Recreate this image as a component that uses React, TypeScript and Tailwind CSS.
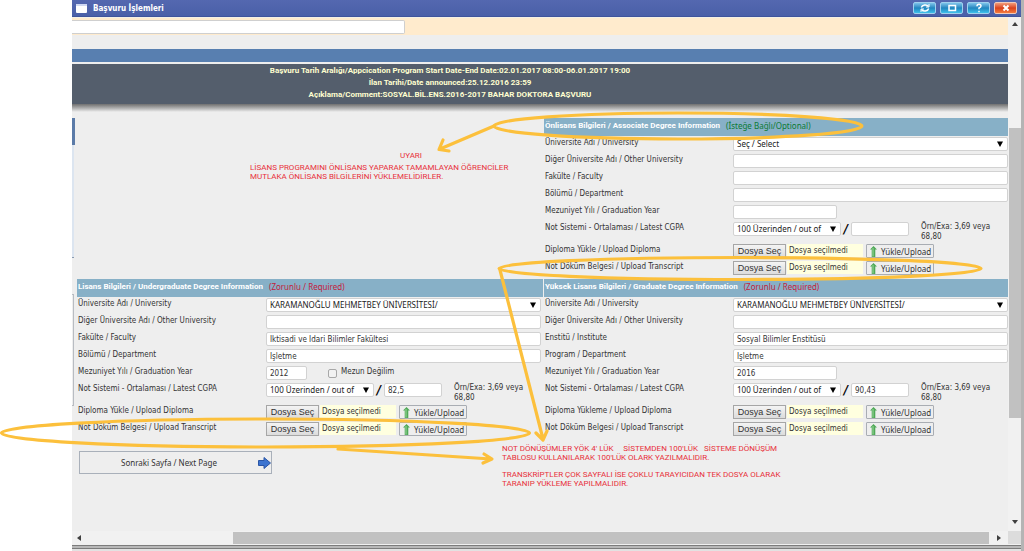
import React, { useId } from "react";

const field =
  "h-[14px] rounded-[2px] border border-[#d2d2d2] bg-white px-[3px] text-[8px] leading-[12px] text-[#333] outline-none";

function Select({ id, value, className }: { id: string; value: string; className: string }) {
  return (
    <span className={`relative block ${className}`}>
      <select
        id={id}
        className="block h-[14px] w-full appearance-none rounded-[2px] border border-[#d2d2d2] bg-white pl-[3px] pr-3 font-['Noto_Sans',sans-serif] text-[8px] leading-[12px] text-[#222] outline-none"
      >
        <option>{value}</option>
      </select>
      <svg className="pointer-events-none absolute right-[5px] top-1 h-[6px] w-[6px]" viewBox="0 0 6 6">
        <path d="M0 0.5H6L3 6Z" fill="#000" />
      </svg>
    </span>
  );
}

function Row({ label, id, tall, children }: { label: string; id: string; tall?: boolean; children: React.ReactNode }) {
  return (
    <div className={`flex items-start ${tall ? "h-[22px]" : "h-[17px]"}`}>
      <label htmlFor={id} className="w-[188px] shrink-0 whitespace-nowrap leading-[14px]">
        {label}
      </label>
      <div className="flex min-w-0 flex-1 items-start pt-px">{children}</div>
    </div>
  );
}

function TextRow({ label, value = "" }: { label: string; value?: string }) {
  const id = useId();
  return (
    <Row label={label} id={id}>
      <input id={id} type="text" defaultValue={value} className={`${field} w-[275px] shrink-0`} />
    </Row>
  );
}

function FileRow({ label }: { label: string }) {
  const id = useId();
  return (
    <Row label={label} id={id}>
      <button
        id={id}
        className="h-[14px] w-[53px] shrink-0 border border-[#a6a6a6] bg-linear-to-b from-[#f4f4f4] to-[#dcdcdc] font-['Liberation_Sans',sans-serif] text-[9px] leading-[12px] text-[#333]"
      >
        Dosya Seç
      </button>
      <span className="ml-px h-[13px] w-[76px] shrink-0 bg-[#ffffdf] pl-[2px] leading-[14px]">Dosya seçilmedi</span>
      <button className="ml-[3px] flex h-[14px] w-[68px] shrink-0 items-center gap-1 rounded-[1px] border border-[#a9adb3] bg-[#eeeeee] pl-[3px] font-['Noto_Sans',sans-serif] text-[8px] leading-[12px] text-[#333]">
        <svg className="h-[11px] w-[7px] shrink-0" viewBox="0 0 7 11">
          <path d="M3.5 0L7 3.5H5.3V11H1.7V3.5H0Z" fill="#4fa957" />
          <path d="M3 2V10.500" stroke="#9bd69c" strokeWidth="1" />
        </svg>
        <span className="pt-[2px]">Yükle/Upload</span>
      </button>
    </Row>
  );
}

type SectionProps = {
  title: string;
  note: string;
  optional?: boolean;
  university: string;
  third: [string, string];
  fourth: [string, string];
  year: string;
  score: string;
  diploma: string;
  undergraduate?: boolean;
};

function Section({ title, note, optional, university, third, fourth, year, score, diploma, undergraduate }: SectionProps) {
  const id = useId();
  return (
    <section>
      <h2 className="flex h-[18px] gap-[6px] whitespace-nowrap bg-[#87b0c7] pl-px text-[8px] leading-[15px]">
        <span className="font-['Roboto',sans-serif] font-bold text-white">{title}</span>
        <span className={`font-['Noto_Sans',sans-serif] ${optional ? "text-[#0b7a35]" : "text-[#c4213c]"}`}>{note}</span>
      </h2>
      <div className="pl-px">
        <Row label="Üniversite Adı / University" id={`${id}u`}>
          <Select id={`${id}u`} value={university} className="w-[275px] shrink-0" />
        </Row>
        <TextRow label="Diğer Üniversite Adı / Other University" />
        <TextRow label={third[0]} value={third[1]} />
        <TextRow label={fourth[0]} value={fourth[1]} />
        <Row label="Mezuniyet Yılı / Graduation Year" id={`${id}y`}>
          <input
            id={`${id}y`}
            type="text"
            defaultValue={year}
            className={`${field} ${undergraduate ? "w-[41px]" : "w-[104px]"}`}
          />
          {undergraduate && (
            <label className="ml-[21px] flex items-start gap-1 leading-[12px]">
              <input
                type="checkbox"
                className="mt-[3px] h-[9px] w-[9px] appearance-none rounded-[2px] border border-[#a8a8a8] bg-[#f2f2f2]"
              />
              Mezun Değilim
            </label>
          )}
        </Row>
        <Row label="Not Sistemi - Ortalaması / Latest CGPA" id={`${id}s`} tall>
          <Select id={`${id}s`} value="100 Üzerinden / out of" className="w-[108px] shrink-0" />
          <span className="w-[10px] shrink-0 text-center text-[13px] font-bold italic leading-[14px] text-black">/</span>
          <input type="text" aria-label="CGPA" defaultValue={score} className={`${field} w-[58px] shrink-0`} />
          <span className="ml-3 w-[84px] shrink-0 leading-[10px]">Örn/Exa: 3,69 veya 68,80</span>
        </Row>
        <FileRow label={diploma} />
        <FileRow label="Not Döküm Belgesi / Upload Transcript" />
      </div>
    </section>
  );
}

function TitleButton({ label, close, children }: { label: string; close?: boolean; children: React.ReactNode }) {
  return (
    <button
      aria-label={label}
      className={`flex h-3 w-[23px] items-center justify-center rounded-[2px] border ${
        close
          ? "border-[#f0c8b8] bg-linear-to-b from-[#f09a78] via-[#d8401c] to-[#f47a3c]"
          : "border-[#9fd0ee] bg-linear-to-b from-[#7cc4ea] via-[#1f86bf] to-[#3fc0ea]"
      }`}
    >
      <svg className="h-[10px] w-[12px]" viewBox="0 0 12 10" fill="none" stroke="#fff" strokeWidth="1.500">
        {children}
      </svg>
    </button>
  );
}

function Arrow({ d }: { d: string }) {
  return (
    <svg className="h-[6px] w-[6px]" viewBox="0 0 6 6">
      <path d={d} fill="#404040" />
    </svg>
  );
}

function Annotations() {
  return (
    <svg
      className="pointer-events-none absolute left-0 top-0 h-[551px] w-[1024px]"
      viewBox="0 0 1024 551"
      fill="none"
      stroke="#fcc03c"
      strokeWidth="3.200"
      strokeLinecap="round"
      strokeLinejoin="round"
    >
      <ellipse cx="678" cy="126" rx="184" ry="13" />
      <path d="M494 126L440 149M443 140L439 149.500L449 151" />
      <ellipse cx="740" cy="268.500" rx="241" ry="11" />
      <path d="M500 270L543 439M536 433L543 440L547 431" />
      <ellipse cx="265.500" cy="433" rx="264" ry="14" />
      <path d="M338 449L491 459M484 454L492 459L483 463" />
    </svg>
  );
}

export default function App() {
  return (
    <div className="relative min-h-screen overflow-hidden bg-white pl-[72px] font-['DejaVu_Sans_Condensed','DejaVu_Sans',sans-serif] text-[8px] text-[#333]">
      <div className="flex min-h-screen flex-col border-r-[3px] border-[#b4b4b4] bg-[#eeeeee]">
        <header className="flex h-[17px] shrink-0 items-center border-b border-[#3f549c] bg-linear-to-b from-[#5468b0] to-[#4a60a8] pl-1 pr-1">
          <svg className="mr-[6px] h-[9px] w-[11px]" viewBox="0 0 11 9">
            <rect width="11" height="9" rx="1" fill="#fff" />
            <rect width="11" height="2" fill="#cfd8f2" />
          </svg>
          <h1 className="flex-1 pt-px text-[8px] font-bold text-white">Başvuru İşlemleri</h1>
          <div className="flex gap-1">
            <TitleButton label="Yenile">
              <path d="M9.500 3.500A4 3.500 0 0 0 2.300 4.500M2.500 6.500A4 3.500 0 0 0 9.700 5.500" />
              <path d="M10 1V4H7M2 9V6H5" strokeWidth="1" />
            </TitleButton>
            <TitleButton label="Büyüt">
              <rect x="3" y="2.500" width="6.500" height="5" />
            </TitleButton>
            <TitleButton label="Yardım">
              <path d="M4 3.200Q4 1.200 6 1.200T8 3Q8 4.200 6 5V6.300M6 7.800V9.300" />
            </TitleButton>
            <TitleButton label="Kapat" close>
              <path d="M3.500 2.500L8.500 7.500M8.500 2.500L3.500 7.500" strokeWidth="2" />
            </TitleButton>
          </div>
        </header>

        <div className="flex min-h-0 flex-1">
          <main className="flex min-w-0 flex-1 flex-col overflow-hidden">
            <div className="h-[18px] shrink-0 border-t border-[#f4f0e4] bg-[#ffebcd] pt-[2px]">
              <input
                aria-label="Arama"
                type="text"
                className="block h-[14px] w-[333px] rounded-r-[2px] border border-l-0 border-[#cfcfcf] bg-white"
              />
            </div>
            <div className="mt-[14px] h-[13px] shrink-0 bg-[#587fb0]" />
            <div className="mt-[2px] h-10 shrink-0 bg-[#545e6c] pr-[180px] pt-px text-center font-['Roboto',sans-serif] font-bold leading-[12px] text-[#ffffd0]">
              <p>Başvuru Tarih Aralığı/Appcication Program Start Date-End Date:02.01.2017 08:00-06.01.2017 19:00</p>
              <p>İlan Tarihi/Date announced:25.12.2016 23:59</p>
              <p>Açıklama/Comment:SOSYAL.BİL.ENS.2016-2017 BAHAR DOKTORA BAŞVURU</p>
            </div>
            <div className="h-2 shrink-0 bg-linear-to-b from-[#707070] to-[#eeeeee]" />

            <div className="mt-[6px] -mr-0.5 flex">
              <div className="flex w-[5px] shrink-0 flex-col">
                <div className="h-[27px] w-[3px] bg-[#5b7ba8]" />
                <div className="h-[113px] w-[2px] border-b border-[#8a9bb0] bg-[#dce5f0]" />
                <div className="mt-9 h-[112px] w-[2px] border-y border-r border-[#b8bcc2]" />
              </div>
              <div className="grid flex-1 grid-cols-2 gap-x-px gap-y-0.5">
                <div className="pl-[173px] pt-[33px] font-['Roboto',sans-serif] leading-[9px] text-[#e8303a]">
                  <p className="w-[322px] pb-[3px] text-center">UYARI</p>
                  <p className="whitespace-nowrap">LİSANS PROGRAMINI ÖNLİSANS YAPARAK TAMAMLAYAN ÖĞRENCİLER</p>
                  <p className="whitespace-nowrap">MUTLAKA ÖNLİSANS BİLGİLERİNİ YÜKLEMELİDİRLER.</p>
                </div>
                <Section
                  title="Önlisans Bilgileri / Associate Degree Information"
                  note="(İsteğe Bağlı/Optional)"
                  optional
                  university="Seç / Select"
                  third={["Fakülte / Faculty", ""]}
                  fourth={["Bölümü / Department", ""]}
                  year=""
                  score=""
                  diploma="Diploma Yükle / Upload Diploma"
                />
                <Section
                  title="Lisans Bilgileri / Undergraduate Degree Information"
                  note="(Zorunlu / Required)"
                  university="KARAMANOĞLU MEHMETBEY ÜNİVERSİTESİ/"
                  third={["Fakülte / Faculty", "İktisadi ve İdari Bilimler Fakültesi"]}
                  fourth={["Bölümü / Department", "İşletme"]}
                  year="2012"
                  score="82,5"
                  diploma="Diploma Yükle / Upload Diploma"
                  undergraduate
                />
                <Section
                  title="Yüksek Lisans Bilgileri / Graduate Degree Information"
                  note="(Zorunlu / Required)"
                  university="KARAMANOĞLU MEHMETBEY ÜNİVERSİTESİ/"
                  third={["Enstitü / Institute", "Sosyal Bilimler Enstitüsü"]}
                  fourth={["Program / Department", "İşletme"]}
                  year="2016"
                  score="90,43"
                  diploma="Diploma Yükleme / Upload Diploma"
                />
              </div>
            </div>

            <div className="flex items-start pl-[7px]">
              <div className="w-[423px] shrink-0 pt-[13px]">
                <button className="flex h-[23px] w-[193px] items-center border border-[#a9b0ba] bg-[#eeeeee] font-['Noto_Sans',sans-serif] text-[8px] text-[#333]">
                  <span className="flex-1 pt-px text-center">Sonraki Sayfa / Next Page</span>
                  <svg className="h-3 w-[13px]" viewBox="0 0 13 12">
                    <path d="M0.500 3.500H6V0.500L12.500 6L6 11.500V8.500H0.500Z" fill="#3c74d0" stroke="#2a55a5" />
                  </svg>
                </button>
              </div>
              <div className="whitespace-pre pt-[6px] font-['Roboto',sans-serif] leading-[9px] text-[#e8303a]">
                <p>{"NOT DÖNÜŞÜMLER YÖK 4' LÜK     SİSTEMDEN 100'LÜK   SİSTEME DÖNÜŞÜM"}</p>
                <p>TABLOSU KULLANILARAK 100'LÜK OLARK YAZILMALIDIR.</p>
                <p className="pt-2">TRANSKRİPTLER ÇOK SAYFALI İSE ÇOKLU TARAYICIDAN TEK DOSYA OLARAK</p>
                <p>TARANIP YÜKLEME YAPILMALIDIR.</p>
              </div>
            </div>

            <div className="mt-auto flex h-[13px] shrink-0 items-center bg-[#f1f1f1] pl-1">
              <Arrow d="M5 0V6L1 3Z" />
              <div className="ml-[151px] h-3 flex-1 bg-[#c1c1c1]" />
              <div className="flex w-[19px] justify-center">
                <Arrow d="M1 0V6L5 3Z" />
              </div>
            </div>
          </main>

          <div className="flex w-[13px] shrink-0 flex-col items-center bg-[#f1f1f1] pt-1">
            <Arrow d="M0 5H6L3 1Z" />
            <div className="mt-[101px] h-[290px] w-3 bg-[#c1c1c1]" />
            <div className="mt-auto pb-[6px]">
              <Arrow d="M0 1H6L3 5Z" />
            </div>
            <div className="h-[13px] w-full bg-[#dcdcdc]" />
          </div>
        </div>
        <div className="h-[7px] shrink-0 border-b-2 border-[#e2e2e2] bg-[#f0f0f0] pt-px">
          <div className="h-1 border-y border-[#7c7c7c] bg-[#b8b8b8]" />
        </div>
      </div>
      <Annotations />
    </div>
  );
}
